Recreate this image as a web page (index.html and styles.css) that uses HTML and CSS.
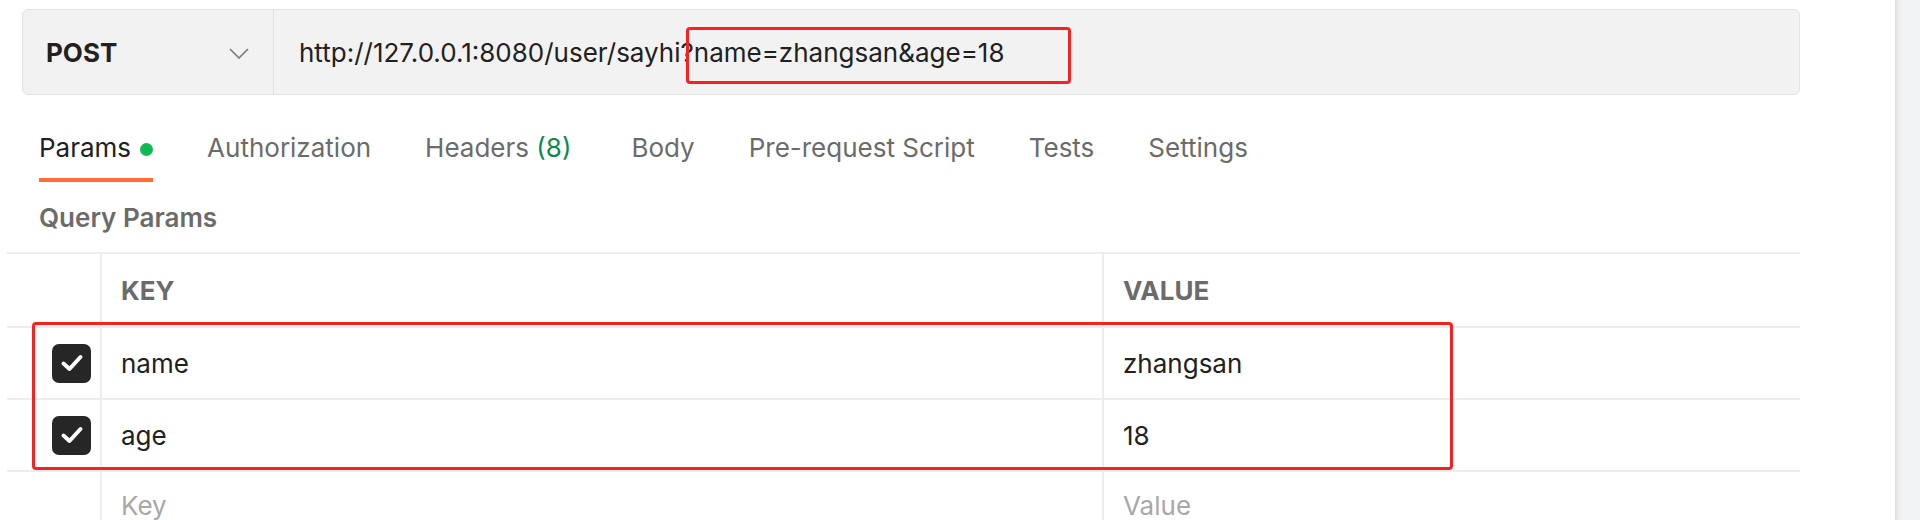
FILE: index.html
```html
<!DOCTYPE html>
<html lang="en">
<head>
<meta charset="utf-8">
<title>Postman request</title>
<link rel="stylesheet" href="styles.css">
</head>
<body>
<div class="page">
  <main class="main">
    <div class="request-bar">
      <div class="method">
        <span class="method-name">POST</span>
        <svg class="chevron" width="20" height="11" viewBox="0 0 20 11"><polyline points="1,1 10,10 19,1" fill="none" stroke="#7a7a7a" stroke-width="1.6"/></svg>
      </div>
      <div class="url">http://127.0.0.1:8080/user/sayhi?name=zhangsan&amp;age=18</div>
      <div class="mark mark-url"></div>
    </div>

    <nav class="tabs">
      <div class="tab active">Params<span class="dot"></span></div>
      <div class="tab">Authorization</div>
      <div class="tab">Headers <span class="count">(8)</span></div>
      <div class="tab">Body</div>
      <div class="tab">Pre-request Script</div>
      <div class="tab">Tests</div>
      <div class="tab">Settings</div>
    </nav>

    <div class="section-title">Query Params</div>

    <div class="table">
      <div class="row head">
        <div class="cell check"></div>
        <div class="cell key">KEY</div>
        <div class="cell value">VALUE</div>
      </div>
      <div class="row">
        <div class="cell check"><span class="checkbox"><svg width="24" height="20" viewBox="0 0 24 20"><polyline points="3.5,10.5 9.5,16 20.5,4" fill="none" stroke="#fff" stroke-width="4" stroke-linecap="round" stroke-linejoin="round"/></svg></span></div>
        <div class="cell key">name</div>
        <div class="cell value">zhangsan</div>
      </div>
      <div class="row">
        <div class="cell check"><span class="checkbox"><svg width="24" height="20" viewBox="0 0 24 20"><polyline points="3.5,10.5 9.5,16 20.5,4" fill="none" stroke="#fff" stroke-width="4" stroke-linecap="round" stroke-linejoin="round"/></svg></span></div>
        <div class="cell key">age</div>
        <div class="cell value">18</div>
      </div>
      <div class="row placeholder">
        <div class="cell check"></div>
        <div class="cell key">Key</div>
        <div class="cell value">Value</div>
      </div>
      <div class="mark mark-rows"></div>
    </div>
  </main>
  <div class="scrollbar"></div>
</div>
</body>
</html>
```
FILE: styles.css
```css
* { box-sizing: border-box; }
html, body { margin: 0; padding: 0; background: #fff; }
body {
  font-family: Inter, "Noto Sans", "Liberation Sans", sans-serif;
  color: #212121;
  overflow: hidden;
  height: 520px;
}
.page { display: flex; height: 520px; }
.main { flex: 1; padding: 0 95px 0 7px; min-width: 0; }

.request-bar {
  position: relative;
  display: flex;
  margin: 9px 0 0 15px;
  height: 86px;
  background: #f2f2f2;
  border: 1px solid #e3e3e3;
  border-radius: 6px;
}
.method {
  width: 251px;
  display: flex;
  align-items: center;
  justify-content: space-between;
  padding: 0 24px 0 23px;
  border-right: 1px solid #e3e3e3;
}
.method-name { font-size: 26px; font-weight: 700; color: #212121; }
.chevron { display: block; margin-top: 2px; }
.url {
  display: flex;
  align-items: center;
  padding-left: 25px;
  font-size: 26px;
  color: #212121;
  white-space: nowrap;
}
.mark { position: absolute; border: 3px solid #fa2020; border-radius: 4px; pointer-events: none; }
.mark-url { left: 663px; top: 17px; width: 385px; height: 57px; }

.tabs {
  display: flex;
  gap: 54px;
  margin: 38px 0 0 32px;
}
.tab {
  display: flex;
  align-items: center;
  font-size: 26px;
  line-height: 30px;
  color: #6b6b6b;
  padding-bottom: 15px;
  border-bottom: 4px solid transparent;
  white-space: pre;
}
.tab.active { color: #212121; border-bottom-color: #ff6c37; }
.dot { width: 13px; height: 13px; border-radius: 50%; background: #0cbb52; margin-left: 9px; margin-top: 2px; }
.count { color: #0b8a4f; margin-right: 6px; }

.section-title {
  margin: 21px 0 0 32px;
  font-size: 26px;
  line-height: 30px;
  font-weight: 600;
  color: #6b6b6b;
}

.table {
  position: relative;
  margin-top: 19px;
  border-top: 2px solid #ededed;
}
.row {
  display: grid;
  grid-template-columns: 93px 1002px 1fr;
  height: 72px;
  border-bottom: 2px solid #ededed;
}
.row.head { height: 74px; }
.cell {
  display: flex;
  align-items: center;
  font-size: 26px;
  color: #212121;
}
.cell.key, .cell.value { border-left: 2px solid #ededed; padding-left: 19px; }
.head .cell { font-weight: 700; color: #6b6b6b; }
.placeholder { border-bottom: none; }
.placeholder .cell { color: #a8a8a8; padding-bottom: 6px; }
.cell.check { padding-left: 45px; }
.checkbox {
  width: 39px;
  height: 39px;
  border-radius: 7px;
  background: #262626;
  display: flex;
  align-items: center;
  justify-content: center;
}
.checkbox svg { display: block; }
.mark-rows { left: 25px; top: 68px; width: 1421px; height: 148px; }

.scrollbar {
  width: 25px;
  background: linear-gradient(to right, #dcdcdc 0, #eaeaea 3px, #f1f2f4 7px, #f2f3f5 100%);
}
```
